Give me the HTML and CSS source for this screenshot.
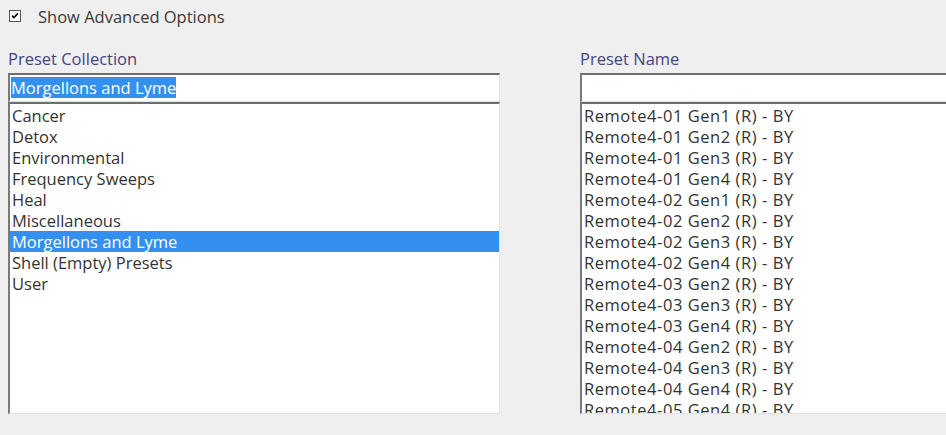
FILE: index.html
```html
<!DOCTYPE html>
<html lang="en">

<head>
    <meta charset="UTF-8">
    <meta name="viewport" content="width=device-width, initial-scale=1.0">
    <title>Preset Selection</title>
    <link rel="stylesheet" href="styles.css">
</head>

<body>
    <div class="page">
        <label class="option">
            <span class="check">
                <svg viewBox="0 0 12 12">
                    <path d="M2.5 5.5l2.2 2.4L9.5 2.8" />
                </svg>
            </span>
            <span>Show Advanced Options</span>
        </label>

        <div class="panels">
            <div class="panel">
                <div class="caption">Preset Collection</div>
                <div class="field"><span class="selected-text">Morgellons and Lyme</span></div>
                <ul class="list">
                    <li>Cancer</li>
                    <li>Detox</li>
                    <li>Environmental</li>
                    <li>Frequency Sweeps</li>
                    <li>Heal</li>
                    <li>Miscellaneous</li>
                    <li class="active">Morgellons and Lyme</li>
                    <li>Shell (Empty) Presets</li>
                    <li>User</li>
                </ul>
            </div>

            <div class="panel panel-wide">
                <div class="caption">Preset Name</div>
                <div class="field"></div>
                <ul class="list list-names">
                    <li>Remote4-01 Gen1 (R) - BY</li>
                    <li>Remote4-01 Gen2 (R) - BY</li>
                    <li>Remote4-01 Gen3 (R) - BY</li>
                    <li>Remote4-01 Gen4 (R) - BY</li>
                    <li>Remote4-02 Gen1 (R) - BY</li>
                    <li>Remote4-02 Gen2 (R) - BY</li>
                    <li>Remote4-02 Gen3 (R) - BY</li>
                    <li>Remote4-02 Gen4 (R) - BY</li>
                    <li>Remote4-03 Gen2 (R) - BY</li>
                    <li>Remote4-03 Gen3 (R) - BY</li>
                    <li>Remote4-03 Gen4 (R) - BY</li>
                    <li>Remote4-04 Gen2 (R) - BY</li>
                    <li>Remote4-04 Gen3 (R) - BY</li>
                    <li>Remote4-04 Gen4 (R) - BY</li>
                    <li>Remote4-05 Gen4 (R) - BY</li>
                </ul>
            </div>
        </div>
    </div>
</body>

</html>
```

FILE: styles.css
```css
body,
html {
    margin: 0;
    padding: 0;
    height: 100%;
    width: 100%;
    overflow: hidden;
    background-color: #efefef;
    font-family: "Open Sans", "Liberation Sans", sans-serif;
    font-size: 16.5px;
    color: #333333;
}

.page {
    padding: 6px 0 0 8px;
}

.option {
    display: flex;
    align-items: center;
    gap: 17px;
    height: 20px;
    padding-left: 1px;
    color: #3a3a3a;
}

.check {
    width: 10px;
    height: 10px;
    border: 1px solid #555555;
    background-color: #ffffff;
    display: flex;
}

.check svg {
    width: 10px;
    height: 10px;
    fill: none;
    stroke: #111111;
    stroke-width: 2;
}

.panels {
    display: flex;
    gap: 80px;
    margin-top: 23px;
}

.panel {
    width: 492px;
    flex-shrink: 0;
}

.panel-wide {
    width: 420px;
}

.caption {
    color: #45457f;
    line-height: 20px;
    margin-bottom: 4px;
}

.field,
.list {
    background-color: #ffffff;
    border-top: 2px solid #6e6e6e;
    border-left: 2px solid #7a7a7a;
    border-right: 1px solid #e2e2e2;
    border-bottom: 1px solid #e2e2e2;
    box-sizing: border-box;
}

.field {
    height: 29px;
    padding: 2px 1px;
    line-height: 21px;
}

.selected-text {
    display: inline-block;
    background-color: #3390f0;
    color: #ffffff;
}

.list {
    list-style: none;
    margin: 0;
    padding: 1px 0 0 0;
    height: 312px;
    overflow: hidden;
}

.list li {
    line-height: 21px;
    padding-left: 2px;
    white-space: nowrap;
}

.list-names li {
    letter-spacing: 0.55px;
}

.list li.active {
    background-color: #3390f0;
    color: #ffffff;
}
```
